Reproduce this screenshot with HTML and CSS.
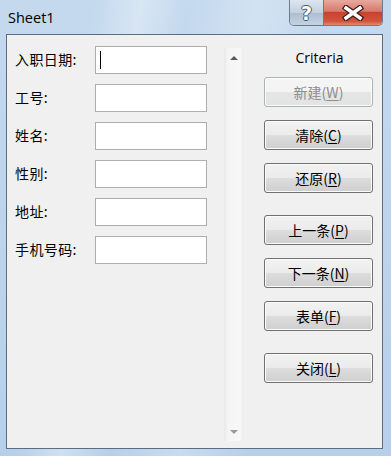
FILE: index.html
```html
<!DOCTYPE html>
<html lang="zh-CN">
<head>
    <meta charset="UTF-8">
    <title>Sheet1</title>
    <link rel="stylesheet" href="styles.css">
</head>
<body>
    <div class="window">
        <div class="titlebar">
            <div class="title">Sheet1</div>
            <div class="caption-buttons">
                <div class="cap-btn help">?</div>
                <div class="cap-btn close">
                    <svg width="22" height="16" viewBox="0 0 22 16">
                        <path d="M4 3 L18 13 M18 3 L4 13" stroke="#3a1a18" stroke-width="6" stroke-linecap="square"/>
                        <path d="M4 3 L18 13 M18 3 L4 13" stroke="#ffffff" stroke-width="3.5" stroke-linecap="square"/>
                    </svg>
                </div>
            </div>
        </div>

        <div class="client">
            <div class="fields">
                <label>入职日期:</label>
                <div class="field"><span class="caret"></span></div>
                <label>工号:</label>
                <div class="field"></div>
                <label>姓名:</label>
                <div class="field"></div>
                <label>性别:</label>
                <div class="field"></div>
                <label>地址:</label>
                <div class="field"></div>
                <label>手机号码:</label>
                <div class="field"></div>
            </div>

            <div class="scrollbar">
                <div class="arrow up"></div>
                <div class="arrow down"></div>
            </div>

            <div class="actions">
                <div class="criteria">Criteria</div>
                <button class="disabled">新建(<u>W</u>)</button>
                <button>清除(<u>C</u>)</button>
                <button>还原(<u>R</u>)</button>
                <button class="sep">上一条(<u>P</u>)</button>
                <button>下一条(<u>N</u>)</button>
                <button>表单(<u>F</u>)</button>
                <button class="sep">关闭(<u>L</u>)</button>
            </div>
        </div>
    </div>
</body>
</html>
```

FILE: styles.css
```css
body {
    margin: 0;
    font-family: "Noto Sans CJK SC", "Noto Sans", sans-serif;
    font-size: 14px;
    color: #000;
}

.window {
    width: 391px;
    height: 456px;
    box-sizing: border-box;
    padding: 0 8px 7px 6px;
    display: flex;
    flex-direction: column;
    background:
        linear-gradient(100deg, rgba(255,255,255,0) 20%, rgba(255,255,255,0.35) 30%, rgba(255,255,255,0) 40%, rgba(255,255,255,0.25) 55%, rgba(255,255,255,0) 70%),
        linear-gradient(to bottom, #c4d9ee, #b7cfe9);
}

.titlebar {
    height: 34px;
    display: flex;
    align-items: flex-start;
}

.title {
    font-family: "Open Sans", "Noto Sans", sans-serif;
    font-size: 14.5px;
    padding: 8px 0 0 2px;
    color: #000;
}

.caption-buttons {
    margin-left: auto;
    display: flex;
    height: 25px;
    border: 1px solid #6b7a8c;
    border-top: none;
    border-radius: 0 0 5px 5px;
    overflow: hidden;
}

.cap-btn {
    height: 25px;
    display: flex;
    justify-content: center;
    align-items: center;
}

.help {
    width: 33px;
    border-right: 1px solid #6b7a8c;
    background: linear-gradient(to bottom, #dce6f0 0%, #c3d0de 50%, #aebdce 51%, #c4d2e0 100%);
    font-family: "DejaVu Sans", sans-serif;
    font-weight: bold;
    font-size: 19px;
    color: #fff;
    text-shadow: -1px 0 #4a5866, 1px 0 #4a5866, 0 -1px #4a5866, 0 1px #4a5866;
}

.close {
    width: 58px;
    background: linear-gradient(to bottom, #e8a99f 0%, #d77a6c 45%, #c8422f 50%, #d2533f 85%, #e48a6e 100%);
}

.client {
    flex: 1;
    display: flex;
    background: #f0f0f0;
    border: 1px solid #5b6d80;
    padding: 11px 9px 7px 8px;
}

.fields {
    display: grid;
    grid-template-columns: 80px 112px;
    grid-auto-rows: 28px;
    row-gap: 10px;
    align-content: start;
    align-items: center;
}

.fields label {
    font-size: 14px;
    letter-spacing: 0.4px;
    padding-bottom: 2px;
}

.field {
    height: 28px;
    box-sizing: border-box;
    background: #fff;
    border: 1px solid #adadad;
    position: relative;
}

.caret {
    position: absolute;
    left: 4px;
    top: 4px;
    width: 1px;
    height: 18px;
    background: #000;
}

.scrollbar {
    width: 20px;
    margin: 2px 20px 0 17px;
    background: linear-gradient(to right, #e8e8e8, #f5f5f5 20%, #f7f7f7 80%, #ebebeb);
    display: flex;
    flex-direction: column;
    justify-content: space-between;
    align-items: center;
    padding: 8px 0 7px;
}

.arrow {
    width: 0;
    height: 0;
    border-left: 4px solid transparent;
    border-right: 4px solid transparent;
}

.arrow.up {
    border-bottom: 4px solid #5a5a5a;
}

.arrow.down {
    border-top: 4px solid #9a9a9a;
}

.actions {
    width: 109px;
    display: flex;
    flex-direction: column;
}

.criteria {
    font-family: "Open Sans", "Noto Sans", sans-serif;
    font-size: 14px;
    text-align: center;
    height: 31px;
    padding-left: 2px;
    line-height: 23px;
}

.actions button {
    height: 30px;
    margin-bottom: 13px;
    border: 1px solid #707070;
    border-radius: 3px;
    background: linear-gradient(to bottom, #f2f2f2 0%, #ebebeb 50%, #dddddd 51%, #cfcfcf 100%);
    box-shadow: inset 0 0 0 1px #fcfcfc;
    font-family: "Noto Sans CJK SC", "Noto Sans", sans-serif;
    font-size: 14px;
    color: #000;
    padding: 0;
    cursor: pointer;
}

.actions button.sep {
    margin-top: 9px;
}

.actions button.disabled {
    color: #8d8d8d;
    border-color: #adb2b5;
    background: linear-gradient(to bottom, #f4f4f4 0%, #f4f4f4 50%, #e5e5e5 51%, #e3e3e3 100%);
}

.actions u {
    text-underline-offset: 2px;
}
```
